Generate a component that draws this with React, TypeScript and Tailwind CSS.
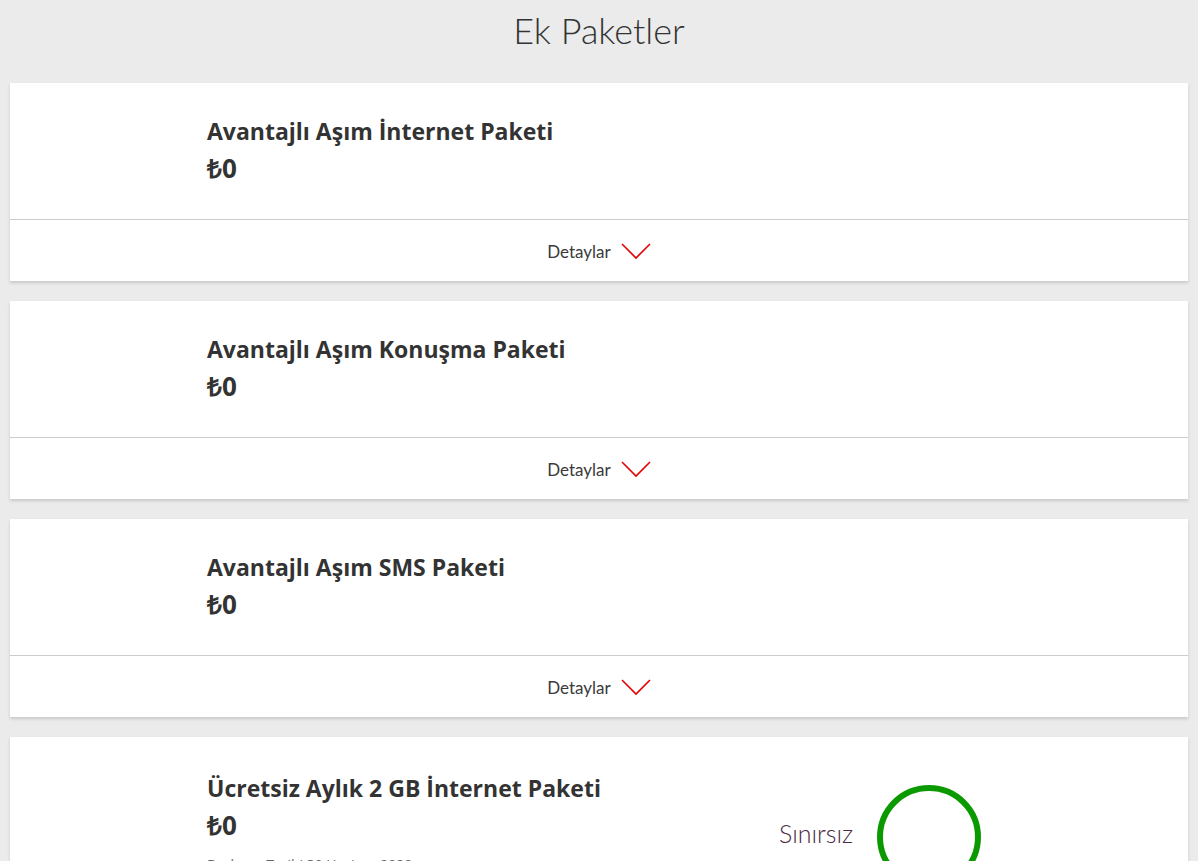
import React from 'react';

interface Paket {
  title: string;
  price: string;
}

const PAKETLER: Paket[] = [
  { title: 'Avantajlı Aşım İnternet Paketi', price: '₺0' },
  { title: 'Avantajlı Aşım Konuşma Paketi', price: '₺0' },
  { title: 'Avantajlı Aşım SMS Paketi', price: '₺0' },
];

function Chevron() {
  return (
    <svg width="30" height="18" viewBox="0 0 30 18" fill="none">
      <path d="M1 2 L15 16 L29 2" stroke="#e60000" strokeWidth="1.6" />
    </svg>
  );
}

function PaketCard({ paket }: { paket: Paket }) {
  return (
    <div className="bg-white shadow-[0_2px_3px_rgba(0,0,0,0.15)]">
      <div className="h-[137px] pl-[197px] pt-[32px] border-b border-[#cccccc] font-['Open_Sans',sans-serif]">
        <div className="text-[23px] font-bold leading-[32px] text-[#333333]">{paket.title}</div>
        <div className="text-[26px] font-bold leading-[42px] text-[#333333]">{paket.price}</div>
      </div>
      <div className="h-[61px] flex items-center justify-center gap-[10px]">
        <span className="text-[17px] text-[#3a3a3a] pt-[2px]">Detaylar</span>
        <Chevron />
      </div>
    </div>
  );
}

export default function App() {
  return (
    <div className="min-h-screen bg-[#ebebeb] px-[10px] pb-10 font-['Lato','Open_Sans',sans-serif]">
      <h1 className="h-[83px] pt-[6px] text-center text-[36px] font-light text-[#333333] leading-[48px]">
        Ek Paketler
      </h1>
      <div className="flex flex-col gap-5">
        {PAKETLER.map((p) => (
          <PaketCard key={p.title} paket={p} />
        ))}
        <div className="bg-white shadow-[0_2px_3px_rgba(0,0,0,0.15)] flex">
          <div className="w-[769px] pl-[197px] pt-[35px] font-['Open_Sans',sans-serif]">
            <div className="text-[23px] font-bold leading-[32px] text-[#333333]">
              Ücretsiz Aylık 2 GB İnternet Paketi
            </div>
            <div className="text-[26px] font-bold leading-[42px] text-[#333333]">₺0</div>
            <div className="mt-[8px] text-[14px] text-[#666666]">Başlama Tarihi 30 Haziran 2020</div>
          </div>
          <div className="flex items-center gap-[24px] pt-[48px] pb-6">
            <span className="text-[25px] font-light text-[#4a2a3f] -mt-[6px]">Sınırsız</span>
            <div className="w-[104px] h-[104px] rounded-full border-[6px] border-[#0a9a00]" />
          </div>
        </div>
      </div>
    </div>
  );
}
